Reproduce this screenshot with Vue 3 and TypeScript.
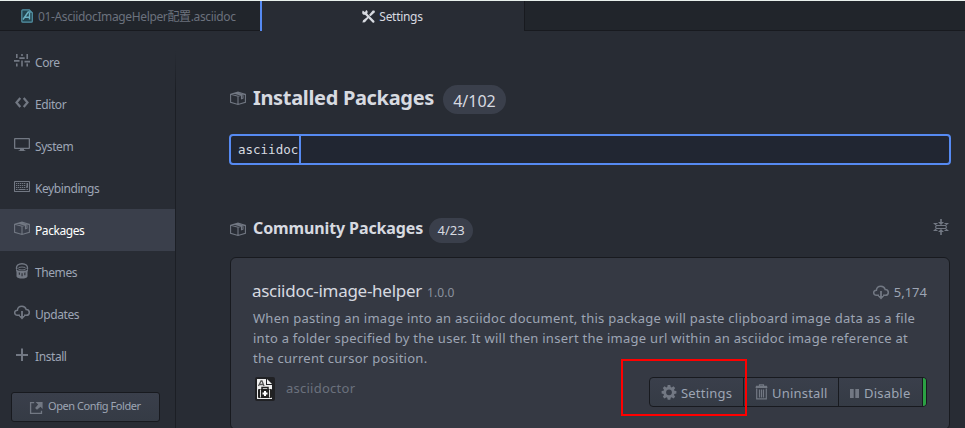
<script setup lang="ts">
import { ref } from 'vue'

interface MenuItem {
  name: string
  icon: string
}

const menu: MenuItem[] = [
  { name: 'Core', icon: 'sliders' },
  { name: 'Editor', icon: 'code' },
  { name: 'System', icon: 'monitor' },
  { name: 'Keybindings', icon: 'keyboard' },
  { name: 'Packages', icon: 'package' },
  { name: 'Themes', icon: 'bucket' },
  { name: 'Updates', icon: 'cloud' },
  { name: 'Install', icon: 'plus' },
]

const active = ref('Packages')
const query = ref('asciidoc')
</script>

<template>
  <svg class="sprite" width="0" height="0" aria-hidden="true">
    <symbol id="sliders" viewBox="0 0 16 16">
      <path d="M2 1h1.600v4H2zM2 10.500h1.600v3H2zM7.200 1h1.600v2H7.200zM7.200 7.500h1.600v6H7.200zM12.400 1H14v5h-1.600zM12.400 10.500H14v3h-1.600zM0 7h5.500v1.700H0zM5.300 4.300h5.400V6H5.300zM10.500 7.800H16v1.700h-5.500z" />
    </symbol>
    <symbol id="code" viewBox="0 0 16 16">
      <path d="M6.300 3L2.500 7.500l3.800 4.500M9.700 3l3.800 4.500L9.700 12" fill="none" stroke="currentColor" stroke-width="2.200" />
    </symbol>
    <symbol id="monitor" viewBox="0 0 16 16">
      <path fill-rule="evenodd" d="M1 1h14q1 0 1 1v9q0 1-1 1h-5v1l2 1H4l2-1v-1H1q-1 0-1-1V2q0-1 1-1zm.300 1.300v8.400h13.400V2.300z" />
    </symbol>
    <symbol id="keyboard" viewBox="0 0 16 16">
      <rect x=".5" y="2.500" width="15" height="10" rx=".5" fill="none" stroke="currentColor" stroke-width="1.100" />
      <path d="M2 4.500h10M2 6.500h10M2 8.500h10" fill="none" stroke="currentColor" stroke-width="1" stroke-dasharray="1.300 .7" />
      <path d="M2 10h1.500v1H2zM12.500 10H14v1h-1.500zM4.500 10h7v1h-7zM12.500 4H14v4.800h-2V7.500h.500z" />
    </symbol>
    <symbol id="package" viewBox="0 0 16 16">
      <path d="M.6 3.300L8 1.100l7.400 2.200v8L8 13.500.6 11.300zM.6 3.300L8 5.200l7.400-1.900M8 5.200v8.300M4 2.300L11.500 4.300v3.500l1.500-.6V3.800L5.800 1.800" fill="none" stroke="currentColor" stroke-width="1.100" />
    </symbol>
    <symbol id="bucket" viewBox="0 0 16 16">
      <path d="M2.600 6C2 2.500 4.500.7 8 .7s6 1.800 5.400 5.300" fill="none" stroke="currentColor" stroke-width="1.400" />
      <ellipse cx="8" cy="5.500" rx="4" ry="1.500" fill="none" stroke="currentColor" />
      <path fill-rule="evenodd" d="M2 5.500q1 2.500 6 2.500t6-2.500v2L13.500 9v4.500q-1 2-5.500 2t-5.500-2V9L2 7.500zM4.800 9.300v2.500h1.100V9.700zM7.500 10.300v3h1.100v-3zM10.300 9.700v2.500h1.100V9.300z" />
    </symbol>
    <symbol id="cloud" viewBox="0 0 16 16">
      <path d="M6 10.300H3.500C1.600 10.300.7 9 .7 7.700c0-1.600 1.300-2.600 2.700-2.500C3.600 3 5.500 1.200 7.900 1.200c2.200 0 3.700 1.300 4.200 3.200 2 0 3.200 1.400 3.200 3s-1.300 2.900-3 2.900H10" fill="none" stroke="currentColor" stroke-width="1.500" />
      <path d="M7.100 6h1.800v5h2.300L8 14.500 4.800 11h2.300z" />
    </symbol>
    <symbol id="plus" viewBox="0 0 16 16"><path d="M7 1.500h2V7h5v2H9v5H7V9H2V7h5z" /></symbol>
    <symbol id="tools" viewBox="0 0 16 16">
      <path d="M4.200 4.200l9 9.300" fill="none" stroke="currentColor" stroke-width="2.400" stroke-linecap="round" />
      <path d="M2 1.500L4.200 3.500 5.500 1C7.500 1.800 7.500 4 6.300 5.200S3 6.800 1.700 5.200C1 4.200 1.200 2.500 2 1.500z" />
      <path d="M1.500 14.500l.7-2.500L8 7.500l1 1L4.200 14zM8.500 6.500l4-5 1.700.2.8 1.600-4.800 4.500z" />
    </symbol>
    <symbol id="external" viewBox="0 0 16 16">
      <path d="M5.500 2.700H1.700v11.600h11.600V11.500" fill="none" stroke="currentColor" stroke-width="1.400" />
      <path d="M7 2h7.500v7.500L12.300 7.300 8.500 10.500 6.500 8.500l3.300-3.700z" />
    </symbol>
    <symbol id="gear" viewBox="0 0 16 16">
      <path fill-rule="evenodd" d="M6.700 1h2.600l.4 2 1 .4 1.700-1.200 1.800 1.800L13 5.700l.4 1 2 .4v2.500l-2 .4-.4 1 1.200 1.700-1.800 1.800-1.700-1.200-1 .4-.4 2H6.700l-.4-2-1-.4-1.700 1.200-1.800-1.800L3 11l-.4-1-2-.4V7.100l2-.4.400-1L1.800 4l1.800-1.800 1.700 1.200 1-.4zM8 5.400a2.900 2.900 0 1 0 0 5.800 2.900 2.900 0 0 0 0-5.800z" />
    </symbol>
    <symbol id="trash" viewBox="0 0 16 16">
      <path d="M2.700 4.500v10.300h9.600V4.500M5.500 5.500v8M7.500 5.500v8M9.500 5.500v8M5.500 2V.8h4V2" fill="none" stroke="currentColor" stroke-width="1.200" />
      <path d="M2 1.700h11L13.500 4h-12z" />
    </symbol>
    <symbol id="pause" viewBox="0 0 16 16"><path d="M3 4h3.700v9H3zM8.300 4H12v9H8.300z" /></symbol>
    <symbol id="fold" viewBox="0 0 16 16">
      <path d="M7.200 0h1.600v3h2.200L8 6 5 3h2.200zM7.200 16h1.600v-3h2.200L8 10l-3 3h2.200z" />
      <path d="M4.500 4.500H1.300L3.500 6.500h9l2.200-2h-3.200M4.500 11.500H1.300L3.500 9.500h9l2.200 2h-3.200M3.500 6.500L2.500 8l1 1.500M12.500 6.500l1 1.500-1 1.500" fill="none" stroke="currentColor" stroke-width="1.100" />
    </symbol>
    <symbol id="adoc" viewBox="0 0 12 14">
      <path d="M1.700.8h6.600l3 3v8.500q0 .9-.9.900H1.700q-.9 0-.9-.9V1.700q0-.9.9-.9z" fill="#234550" stroke="#5493a6" stroke-width="1.200" />
      <path d="M2 10.500L7.200 3h1.300v7.500M4 8.200h4" fill="none" stroke="#6bb0c2" stroke-width="1.400" />
      <path d="M8 .8v3h3z" fill="#5493a6" />
    </symbol>
  </svg>

  <div class="window">
    <header class="tabs">
      <div class="tab file">
        <svg class="file-icon"><use href="#adoc" /></svg>
        <span>01-AsciidocImageHelper配置.asciidoc</span>
      </div>
      <div class="tab current">
        <svg class="icon"><use href="#tools" /></svg>
        <span>Settings</span>
      </div>
      <div class="tab rest"></div>
    </header>

    <div class="body">
      <nav class="sidebar">
        <a
          v-for="item in menu"
          :key="item.name"
          class="item"
          :class="{ selected: item.name === active }"
          @click="active = item.name"
        >
          <svg class="icon"><use :href="'#' + item.icon" /></svg>
          <span>{{ item.name }}</span>
        </a>
        <button class="config">
          <svg class="icon"><use href="#external" /></svg>
          <span>Open Config Folder</span>
        </button>
      </nav>

      <main class="panel">
        <h1 class="heading main-heading">
          <svg class="icon"><use href="#package" /></svg>
          <span class="heading-text">Installed Packages</span>
          <span class="badge">4/102</span>
        </h1>
        <div class="search"><span>{{ query }}</span><i class="caret"></i></div>
        <h2 class="heading sub-heading">
          <svg class="icon"><use href="#package" /></svg>
          <span class="heading-text">Community Packages</span>
          <span class="badge">4/23</span>
          <svg class="icon fold"><use href="#fold" /></svg>
        </h2>

        <article class="card">
          <div class="title-row">
            <span class="name">asciidoc-image-helper</span>
            <span class="version">1.0.0</span>
            <span class="downloads"><svg class="icon"><use href="#cloud" /></svg><span>5,174</span></span>
          </div>
          <p class="description">
            <span>When pasting an image into an asciidoc document, this package will paste clipboard image data as a file</span>
            <span>into a folder specified by the user. It will then insert the image url within an asciidoc image reference at</span>
            <span>the current cursor position.</span>
          </p>
          <div class="meta">
            <svg class="avatar" viewBox="0 0 24 24">
              <rect x="2" width="20" height="24" rx="2" fill="#202124" />
              <path d="M4 2h9v6h6v14H4z" fill="#eee" />
              <path d="M14 2l5 5h-5z" fill="#eee" />
              <path d="M5.500 9L8 4h1l2 5M7 7.500h3" fill="none" stroke="#555" stroke-width="1.300" />
              <path d="M9 12.500v-2h6v2" fill="none" stroke="#222" stroke-width="1.500" />
              <rect x="5" y="12" width="14" height="9" rx="1" fill="#222" />
              <path d="M7.500 12.500v8M16.500 12.500v8" stroke="#ddd" stroke-width="1" />
              <path d="M9.500 16.500h5M12 14v5" stroke="#fff" stroke-width="2" />
            </svg>
            <span class="author">asciidoctor</span>
            <div class="actions">
              <button class="b-settings"><svg class="icon"><use href="#gear" /></svg><span>Settings</span><i class="marker"></i></button>
              <button class="b-uninstall"><svg class="icon"><use href="#trash" /></svg><span>Uninstall</span></button>
              <button class="b-disable"><svg class="icon"><use href="#pause" /></svg><span>Disable</span></button>
              <i class="status"></i>
            </div>
          </div>
        </article>
      </main>
    </div>
  </div>
</template>

<style>
body {
  margin: 0;
  background: #282c34;
  overflow: hidden;
}
</style>

<style scoped>
.sprite { position: absolute; }
.window {
  box-sizing: border-box;
  width: 965px;
  height: 428px;
  overflow: hidden;
  display: flex;
  flex-direction: column;
  border-top: 1px solid #e8f0ec;
  background: #282c34;
  color: #9da5b4;
  font-family: "Noto Sans", "Open Sans", "Noto Sans CJK SC", sans-serif;
  font-size: 12px;
}
.window * { box-sizing: border-box; }
.icon {
  width: 16px;
  height: 16px;
  flex: none;
  fill: currentColor;
  color: #727883;
}
span { white-space: nowrap; }
.tabs { display: flex; height: 30px; flex: none; }
.tab { display: flex; align-items: center; line-height: 16px; }
.file {
  width: 260px;
  padding: 0 0 0 21px;
  background: #21252b;
  border-bottom: 1px solid #181a1f;
  color: #6b717d;
}
.file-icon { width: 12px; height: 14px; margin-right: 5px; }
.file span { letter-spacing: -0.36px; padding-top: 2px; }
.current {
  width: 264px;
  padding-right: 2px;
  border-left: 2px solid #568af2;
  justify-content: center;
  color: #d7dae0;
}
.current .icon { color: #d7dae0; width: 15px; height: 15px; margin-right: 3px; }
.current span { letter-spacing: -0.3px; padding-top: 2px; }
.rest {
  flex: 1;
  background: #21252b;
  border-left: 1px solid #181a1f;
  border-bottom: 1px solid #181a1f;
}
.body { display: flex; flex: 1; min-height: 0; }
.sidebar {
  width: 176px;
  padding-top: 10px;
  border-right: 1px solid;
  border-image: linear-gradient(#282c34 20px, #1c1f25 60px) 1;
}
.item {
  display: flex;
  align-items: center;
  height: 42px;
  padding-left: 14px;
  gap: 5px;
}
.item .icon { margin-top: -2px; }
.item span { letter-spacing: -0.42px; padding-top: 1px; }
.item.selected { background: #3a3f4b; color: #fff; }
.config {
  display: flex;
  align-items: center;
  width: 149px;
  height: 30px;
  margin: 15px 0 0 11px;
  padding: 0 0 4px 17px;
  border: 1px solid #181a1f;
  border-radius: 3px;
  background: linear-gradient(#3a3f4b, #353b45);
  color: #9da5b4;
  font: 11px "Noto Sans", sans-serif;
  letter-spacing: -0.44px;
}
.config .icon { margin: 4px 4px 0 0; width: 15px; height: 15px; }
.panel { flex: 1; padding: 54px 14px 0 54px; min-width: 0; }
.heading { display: flex; align-items: center; margin: 0; color: #d7dae0; font-weight: 700; }
.heading .icon { margin: -1px 7px 0 0; }
.main-heading { height: 29px; font-size: 20px; }
.main-heading .heading-text { letter-spacing: -0.33px; padding-bottom: 5px; }
.badge {
  display: flex;
  align-items: center;
  justify-content: center;
  border-radius: 15px;
  background: #3a3f4b;
  font-weight: 400;
}
.main-heading .badge { width: 63px; height: 29px; margin-left: 9px; padding-top: 2px; font-size: 16px; }
.search {
  display: flex;
  align-items: center;
  width: 722px;
  height: 31px;
  margin: 20px 0 0 -1px;
  padding-left: 7px;
  border: 2px solid #568af2;
  border-radius: 4px;
  background: #212632;
  color: #d7dae0;
  font: 12.500px "DejaVu Sans Mono", monospace;
}
.caret { width: 2px; height: 27px; margin-left: 1px; background: #568af2; }
.sub-heading { height: 25px; margin-top: 53px; font-size: 16px; }
.sub-heading .heading-text { padding-bottom: 5px; letter-spacing: -0.12px; }
.sub-heading .badge { width: 44px; height: 25px; margin-left: 6px; padding-bottom: 1px; font-size: 13px; }
.sub-heading .fold { margin: -7px 2px 0 auto; }
.card {
  width: 720px;
  height: 173px;
  margin-top: 14px;
  padding: 22px 22px 0 22px;
  border: 1px solid #181a1f;
  border-radius: 6px;
  background: #353943;
}
.title-row { display: flex; align-items: baseline; height: 28px; line-height: 21px; }
.name { margin-left: -1px; font-size: 17px; color: #d7dae0; letter-spacing: -0.28px; }
.version { margin-left: 5px; color: #8a919e; letter-spacing: 0.1px; }
.downloads { display: flex; align-items: center; align-self: flex-start; height: 25px; gap: 5px; margin-left: auto; font-size: 13px; }
.description { display: flex; flex-direction: column; margin: 0; font-size: 13px; line-height: 20px; letter-spacing: 0.265px; }
.meta { display: flex; align-items: flex-start; padding-top: 9px; }
.avatar { width: 24px; height: 24px; }
.author { margin: 0 0 0 9px; line-height: 22px; font-size: 13px; color: #6b717d; letter-spacing: 0.25px; }
.actions { display: flex; height: 30px; margin-left: auto; border: 1px solid #181a1f; border-radius: 4px; width: 278px; background: linear-gradient(#3a3f4b, #353b45); }
.actions button {
  position: relative;
  display: flex;
  align-items: center;
  padding: 0 0 0 11px;
  border: 0;
  border-right: 1px solid #181a1f;
  background: none;
  color: #9da5b4;
  font: 13px "Noto Sans", sans-serif;
  letter-spacing: 0.2px;
}
.actions span { padding-top: 1px; }
.actions .icon { margin-right: 4px; }
.actions .b-settings { width: 94px; }
.actions .b-uninstall { width: 95px; padding-left: 10px; }
.actions .b-uninstall .icon { margin-right: 2px; }
.actions .b-disable { width: 84px; padding-left: 8px; }
.actions .b-disable .icon { margin: 2px 1px 0 0; }
.status { flex: 1; background: #2ba143; border-radius: 0 3px 3px 0; }
.marker {
  position: absolute;
  left: -29px;
  top: -19px;
  width: 126px;
  height: 57px;
  border: 2px solid #f00;
  z-index: 2;
}
</style>
